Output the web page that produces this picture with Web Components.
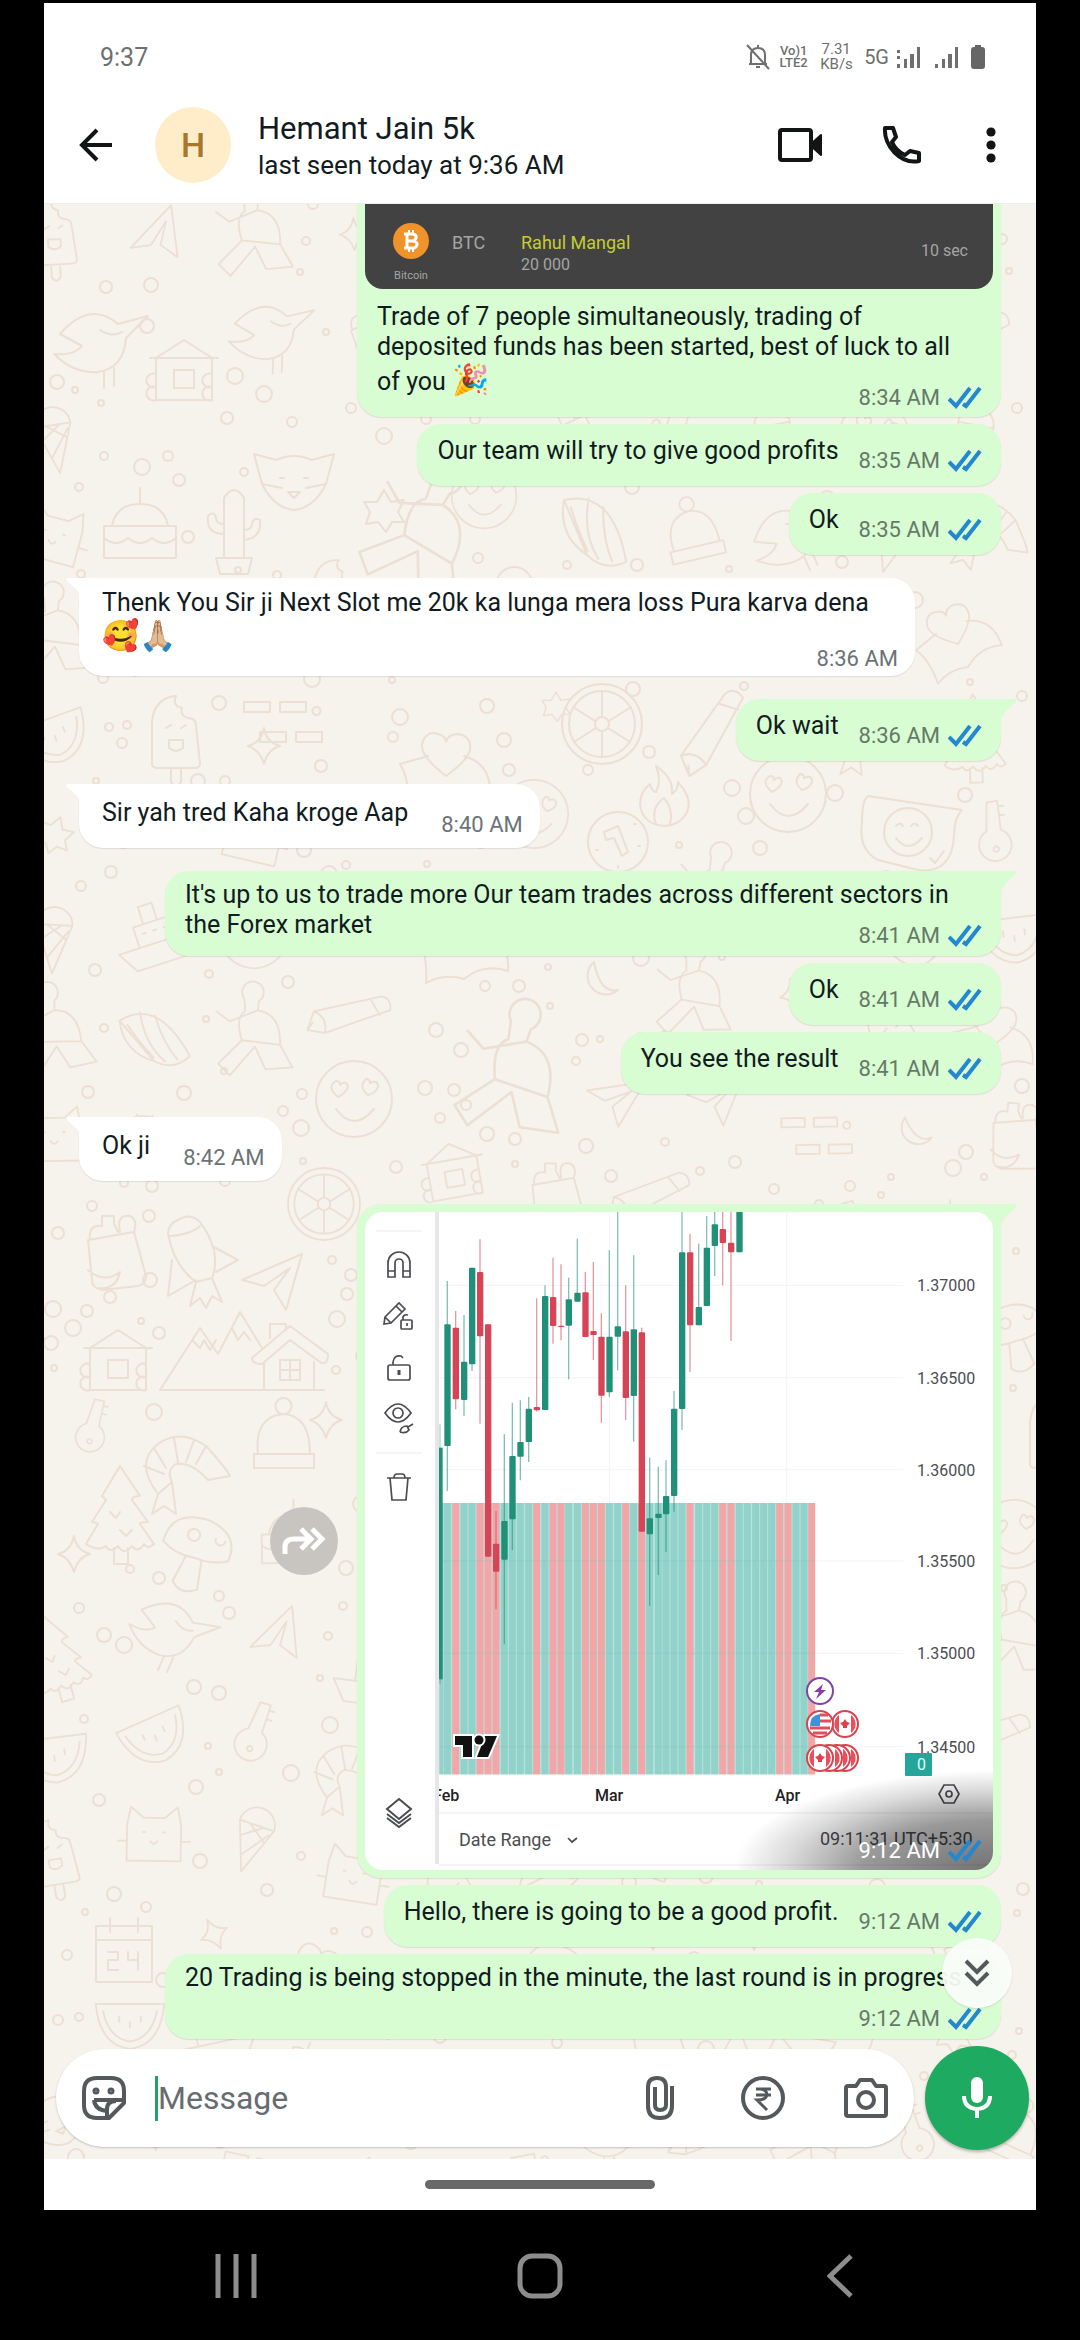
<!DOCTYPE html>
<html lang="en">
<head>
<meta charset="utf-8">
<meta name="viewport" content="width=device-width, initial-scale=1">
<title>Hemant Jain 5k</title>
<style>
  html { background: #000; }
  body { margin: 0; font-family: Roboto, "Noto Sans", sans-serif; color: #111b21; }
</style>
</head>
<body>
<chat-screen>
  <status-bar slot="top"></status-bar>
  <chat-header slot="top" initial="H" name="Hemant Jain 5k" seen="last seen today at 9:36 AM"></chat-header>

  <chat-message out time="8:34 AM" class="first" kind="media">
    <deal-card slot="media"></deal-card>
    Trade of 7 people simultaneously, trading of<br>deposited funds has been started, best of luck to all<br>of you <emoji-mark>🎉</emoji-mark>
  </chat-message>
  <chat-message out time="8:35 AM">Our team will try to give good profits</chat-message>
  <chat-message out time="8:35 AM">Ok</chat-message>
  <chat-message time="8:36 AM" kind="wrap" class="turn">Thenk You Sir ji Next Slot me 20k ka lunga mera loss Pura karva dena<br><emoji-mark>🥰</emoji-mark><emoji-mark>🙏🏼</emoji-mark></chat-message>
  <chat-message out time="8:36 AM" class="turn">Ok wait</chat-message>
  <chat-message time="8:40 AM" class="turn">Sir yah tred Kaha kroge Aap</chat-message>
  <chat-message out time="8:41 AM" kind="wrap" class="turn">It's up to us to trade more Our team trades across different sectors in the Forex market</chat-message>
  <chat-message out time="8:41 AM">Ok</chat-message>
  <chat-message out time="8:41 AM">You see the result</chat-message>
  <chat-message time="8:42 AM" class="turn">Ok ji</chat-message>
  <chat-message out time="9:12 AM" kind="photo" class="turn"><price-chart slot="media"></price-chart></chat-message>
  <chat-message out time="9:12 AM">Hello, there is going to be a good profit.</chat-message>
  <chat-message out time="9:12 AM" kind="wrap">20 Trading is being stopped in the minute, the last round is in progress</chat-message>

  <message-composer slot="composer"></message-composer>
  <system-nav slot="nav"></system-nav>
</chat-screen>

<script>
const define = (name, html, setup) => {
  customElements.define(name, class extends HTMLElement {
    constructor() {
      super();
      const root = this.attachShadow({ mode: 'open' });
      const t = document.createElement('template');
      t.innerHTML = '<style>:host,*{box-sizing:border-box}button{border:0;padding:0;margin:0;background:none;color:inherit;font:inherit;display:block;flex:none}svg{display:block}</style>' + html;
      root.append(t.content.cloneNode(true));
    }
    connectedCallback() { if (setup) setup(this, this.shadowRoot); }
  });
};

/* ---------- wallpaper ---------- */
const DOODLES = {
  icecream: 'M-24 30L-24-12Q-22-36 0-38Q-4-28 6-26Q4-18 12-16Q20-16 20-8L24 30Q24 34 18 34L-18 34Q-24 34-24 30ZM-5 34V48Q0 56 5 48V34M-10-6l5-3m10 3l5-3M-7 6H7V14Q0 20-7 14Z',
  heart: 'M-46 0L-18-8M18-8Q46 0 44 32Q20 24 0 40Q-20 34-38 44Q-36 16-46 0M0 12Q-26-8-24-20Q-20-34-8-30Q0-28 0-22Q2-30 12-30Q26-28 24-14Q22-4 0 12Z',
  wheel: 'M40 0A40 40 0 1 0-40 0A40 40 0 1 0 40 0M33 0A33 33 0 1 0-33 0A33 33 0 1 0 33 0M7 0A7 7 0 1 0-7 0A7 7 0 1 0 7 0M0-7V-33M0 7V33M7-3L29-17M-7-3L-29-17M6 4L28 18M-6 4L-28 18',
  pencil: 'M-44 8L24-26Q36-28 38-14L-26 28L-46 30ZM-44 8Q-28 10-26 28M14-20L28-6M-46 30l4-10',
  flame: 'M-8-30Q10-18 8-2Q14-6 14-14Q30 4 22 18Q14 30 0 30Q-22 28-24 8Q-24-4-14-12Q-12-4-8-4Q-2-16-8-30ZM-8 28Q-14 12 0 2Q10 14 6 28',
  smile: 'M38 0A38 38 0 1 0-38 0A38 38 0 1 0 38 0M-18 10Q0 34 20 10M-16-2Q-28-12-18-18Q-14-18-14-14Q-8-20-6-12Q-8-6-16-2ZM14-4Q4-12 12-20Q16-20 16-16Q24-20 24-12Q22-6 14-4Z',
  note: 'M-44-34L50-20Q42-12 42 6Q40 44 6 40L-34 30Q-54 20-50-8Q-50-30-44-34ZM20 2A24 24 0 1 0-28 2A24 24 0 1 0 20 2M-16-4q4-5 7 0m8 0q4-5 7 0M-16 8Q-4 24 10 8M18 28l5 5l9-12',
  clock: 'M30 0A30 30 0 1 0-30 0A30 30 0 1 0 30 0M-14-10L0-16L10 10L4 14L-4-4L-12-2ZM-22 8h2m40-4h2M0 24v2M16-18h2',
  moon: 'M-6-20A18 18 0 1 0 18 8Q0 12-6-20Z',
  rocket: 'M-14-40Q-2-48 8-38Q30-8 20 18L4 22Q-18 6-24-26Q-24-36-14-40M8-34Q0-26-22-24M20-14L46 0L24 12M-20 0L-24 36L4 20M4 22L-2 46L8 38L14 48L20 36L30 42L20 18',
  plane: 'M-30 4L30-22L14 34L2 14L18-8L-8 10Z',
  cabin: 'M-80 34L-40-28L-22-2L0-44L22-8M-80 34H84M-48-16l8 8l4-8l6 10l6-10M-8-28l6 12l6-8l6 8M12 2L50-30L88-2Q88 10 80 6L50-16L22 8Q12 8 12 2M24 8V34M74 6V34M40 4H60V24H40ZM50 4V24M40 14H60M30-18V-32H46V-26',
  shrimp: 'M-30 26Q-54-6-30-24Q-8-40 18-22Q38 0 42 8L20 12Q4-6-12-4Q-22 2-16 14ZM-44-2l20 8M-34-20l12 20M-14-30l4 24M6-28l-8 22M18-22L8-4M-30 26L-36 46L-24 38L-12 46L-16 14',
  tree: 'M0-44L20-14Q12-14 12-10L28 12Q20 12 20 14L34 34Q28 40 24 34Q18 44 12 36Q4 46-2 36Q-10 44-14 36Q-22 42-34 34L-22 14Q-26 12-28 12L-14-10L-18-14ZM-6 38V54H8V38M-10 2l6 6l4-6M0 20l6 6l6-6',
  mushroom: 'M-34 0Q-34-34 6-32Q38-26 34 2Q20 10 0 8Q-20 10-34 0ZM-8 8L-14 36Q-4 48 12 38L8 8M-12-14a6 6 0 1 0 12 0a6 6 0 1 0-12 0M16-16a5 5 0 1 0 10 0',
  hat: 'M-26 14Q-30-24 0-26Q26-24 26 14M-30 14H30V28H-30ZM0-26a8 8 0 1 0-1 0',
  house: 'M-28-16L0-34L28-16V26H-28ZM-34-16H34M-10-4H10V14H-10ZM-28 0a7 7 0 1 0 0 13a7 7 0 1 0 0 13M28 0a7 7 0 1 0 0 13a7 7 0 1 0 0 13',
  bag: 'M-24-10L22-18L34 26Q34 34 26 36L-10 40Q-20 38-20 30ZM-22-10Q-24-26-10-24V-34H2V-26L6-18M8-18Q4-36 18-34Q26-30 22-18M-24 20Q-8 34 8 22Q4 40-14 38',
  star: 'M0-18Q2-4 16 0Q4 3 0 18Q-4 4-16 0Q-3-3 0-18Z',
  badge: 'M0-20L7-8L20-10L14 2L20 12L8 12L2 22L-6 12L-18 14L-14 2L-20-8L-7-8Z',
  key: 'M-4-36H8V-4A18 18 0 1 1-8-4ZM8-30h6M8-20h6M0 14a3 3 0 1 0 1 0',
  bird: 'M-44-10Q-14-44 14-20L44-28L22-6Q20 24-6 28Q-30 30-50 10Q-30 12-22 2ZM0 28V44M10 24V42M-4-14q12 8 22 2',
  apple: 'M0-14Q22-28 28-4Q28 26 10 34Q0 28-10 34Q-30 24-28-4Q-22-28 0-14ZM0-14Q-2-26 8-34M0-22q-14-2-12-14q12 2 12 14',
  dashes: 'M-36-18h26v10h-26zM0-18h26v10h-26zM-20 12h26v10h-26zM16 12h26v10h-26zM36-13a4 4 0 1 0 1 0',
  fox: 'M-40-20L-18-14Q0-22 18-14L40-20L32 10Q20 34 0 36Q-20 34-32 10ZM-14 4h4m20 0h4M-6 18H6L0 24ZM-32 10L-12 14M32 10L12 14',
  cactus: 'M-10 34V-26Q0-42 10-26V34ZM-10 10Q-28 10-26-8Q-20-14-18-6Q-18 0-10 0M10 16Q28 14 26-4Q20-8 18 0Q18 6 10 6M-18 34H18L14 50H-14Z',
  shell: 'M-36-20Q10-40 36 30Q16 44-4 30ZM-36-20Q-36 16-4 30M-12-26Q-12 10 8 32M4-20Q8 10 22 32M-28-14q10 20 24 40',
  cake: 'M-36 0H36V32H-36ZM-28 0Q-24-22 0-22Q24-22 28 0M0-22V-38M-36 12Q-24 22-12 12Q0 22 12 12Q24 22 36 12',
  cal: 'M-28-22H28V34H-28ZM-28-8H28M-14-30V-16M14-30V-16M-16 4h10v8h-10v10h10M4 4v8h10V4v18',
  melon: 'M-38-18H38Q34 28 0 32Q-34 28-38-18ZM-30-10Q-24 20 0 24Q24 20 30-10M-12-4v6m12 0v6m12-12v6',
  person: 'M-8-40a12 12 0 1 1 16 4L6-26Q32-20 28 14L40 40H10L0 14L-30 44L-42 30L-14 6Q-20-20-8-26ZM6-26L-26-16L-40-28M28 14L-14 6',
  ship: 'M-44 10H44L30 34H-30ZM-20 10V-14H20V10M-8-14V-34H8V-14M-12-4h4m8 0h4m8 0h4',
  leaf: 'M-34 26Q-38-24 30-32Q36 28-34 26ZM-34 26L20-20M-12 8V-14M-2 0H22',
  cone: 'M-20-10A20 20 0 0 1 20-10L0 44ZM-20-10H20M-14 6L8-10M-6 26L16-4M14 6L-8-10',
  cat: 'M-30 30V-10L-26-30L-12-18H12L26-30L30-10V30ZM-12-2h2m20 0h2M-4 8q4 6 8 0M-30 8h-10m70 0h10'
};
const PLACED = [
  ['icecream',132,530],['dashes',236,516],['star',220,542],['heart',402,560],['wheel',558,520],['pencil',672,524,1,-28],['flame',620,592],['smile',744,590],
  ['note',868,626],['clock',574,638],['moon',556,778],['icecream',1010,1230],['shell',552,322,1,10],['badge',340,306],['badge',512,502,.7],['smile',440,292,.85],
  ['person',380,330,1.3,20],['bag',68,1046],['rocket',148,1056],['plane',228,1072],['house',74,1160],['cabin',196,1152],['key',48,1224,.8,12],['shrimp',144,1264],
  ['hat',240,1236],['tree',76,1306],['mushroom',152,1346,1,16],['star',30,1350],['star',282,1216],['cal',80,1744],['melon',86,1816,.9],['fox',250,270],['cactus',190,320],
  ['cake',96,322],['bird',60,140,1],['house',140,170],['person',470,870,1.3,8],['smile',310,895],['heart',420,735],['wheel',280,1000,.9],['apple',572,1086,.9],['cabin',720,1130,1]
];
define('doodle-wall', `
<style>:host{display:block;position:absolute;inset:0;overflow:hidden;background:#f6f2ec}
svg{width:100%;height:100%;fill:none;stroke:#ecdfd4;stroke-width:2;stroke-linejoin:round;stroke-linecap:round}</style>
<svg aria-hidden="true"></svg>`, (el, root) => {
  const names = Object.keys(DOODLES).filter(n => n !== 'cabin');
  let seed = 11;
  const rnd = () => (seed = (seed * 16807) % 2147483647) / 2147483647;
  const items = PLACED.map(p => [...p]);
  const clear = (x, y) => items.every(p => {
    const wide = p[0] === 'cabin' ? 130 : 80;
    return Math.abs(p[1] - x) > wide || Math.abs(p[2] - y) > 80;
  });
  for (let y = 30; y < 2000; y += 20)
    for (let x = 10; x < 1010; x += 20)
      if (clear(x, y)) items.push([names[Math.floor(rnd() * names.length)], x, y, .9, Math.floor(rnd() * 50 - 25)]);
  let out = items.map(([n, x, y, s = 1, r = 0]) => `<path transform="translate(${x} ${y}) rotate(${r}) scale(${s})" d="${DOODLES[n]}"/>`).join('');
  for (let i = 0; i < 1400; i++) {
    const x = Math.floor(rnd() * 992), y = Math.floor(rnd() * 1956);
    if (items.every(p => Math.hypot(p[1] - x, p[2] - y) > (p[0] === 'cabin' ? 84 : p[0] ? 46 : 18))) {
      out += `<circle cx="${x}" cy="${y}" r="${3 + Math.floor(rnd() * 6)}"/>`;
      items.push(['', x, y]);
    }
  }
  root.querySelector('svg').innerHTML = out;
});

/* ---------- screen frame ---------- */
define('chat-screen', `
<style>
:host{display:block;background:#000;min-height:100vh;padding-top:3px}
.phone{margin:0 44px;background:#fff}
.chat{position:relative;overflow:hidden}
.log{position:relative;display:flex;flex-direction:column;gap:7px;padding:0 35px 7px}
::slotted(.turn){margin-top:16px}
.down{position:absolute;right:24px;bottom:151px;width:70px;height:70px;border-radius:50%;background:rgba(250,252,249,.94);box-shadow:0 1px 2px rgba(0,0,0,.12);display:grid;place-items:center}
.handle{height:51px;display:flex;justify-content:center;padding-top:21px}
.handle i{width:230px;height:9px;border-radius:5px;background:#696969}
</style>
<div class="phone">
  <slot name="top"></slot>
  <main class="chat">
    <doodle-wall></doodle-wall>
    <div class="log"><slot></slot></div>
    <slot name="composer"></slot>
    <button class="down" aria-label="Scroll to latest"><svg width="28" height="30" viewBox="0 0 28 30" fill="none" stroke="#54595c" stroke-width="4"><path d="M3 3l11 11L25 3M3 15l11 11l11-11"/></svg></button>
  </main>
  <div class="handle"><i></i></div>
</div>
<slot name="nav"></slot>`);

/* ---------- status bar ---------- */
define('status-bar', `
<style>
:host{display:flex;align-items:center;justify-content:space-between;height:86px;padding:22px 51px 0 56px;color:#6f6f6f;font-size:25px}
.right{display:flex;align-items:center}
.two{display:flex;flex-direction:column;text-align:center;font-weight:500}
.volte{font-size:13px;line-height:12px;margin-left:8px;width:31px}
.speed{font-size:15px;line-height:15px;margin-left:11px;width:32px;font-weight:400}
.net{font-size:20px;margin:0 7px 0 12px}
</style>
<span>9:37</span>
<div class="right">
  <svg width="24" height="26" viewBox="0 0 24 26" fill="none" stroke="#6f6f6f" stroke-width="2"><path d="M5 20V11Q5 4 12 4Q19 4 19 11V20M3 20H21M12 4V1M10 23h4M1 1L23 25"/></svg>
  <span class="two volte"><span>Vo)1</span><span>LTE2</span></span>
  <span class="two speed"><span>7.31</span><span>KB/s</span></span>
  <span class="net">5G</span>
  <svg width="25" height="24" viewBox="0 0 25 24" fill="#6f6f6f"><path d="M1 5h3v3H1zM1 11h3v3H1zM1 19h3v4H1zM8 14h3v9H8zM14 9h4v14h-4zM21 2h3v21h-3z"/></svg>
  <svg width="25" height="24" viewBox="0 0 25 24" fill="#6f6f6f" style="margin:0 12px 0 13px"><path d="M1 19h3v4H1zM8 14h3v9H8zM14 9h4v14h-4zM21 2h3v21h-3z"/></svg>
  <svg width="14" height="26" viewBox="0 0 14 26" fill="#666"><rect y="3" width="14" height="22" rx="3"/><rect x="4" y="1" width="6" height="4"/></svg>
</div>`);

/* ---------- chat header ---------- */
define('chat-header', `
<style>
:host{display:flex;align-items:center;height:115px;padding:0 40px 2px 35px;border-bottom:1px solid #ececec}
.avatar{width:76px;height:76px;border-radius:50%;background:#ffecc9;color:#a8762c;display:grid;place-items:center;font-size:34px;font-weight:500;margin:0 27px 0 42px;flex:none}
.who{flex:1;min-width:0;display:flex;flex-direction:column;padding-top:2px}
.name{font-size:31px;line-height:38px}
.seen{font-size:26px;line-height:34px}
.acts{display:flex;align-items:center}
</style>
<button aria-label="Back"><svg width="34" height="34" viewBox="0 0 34 34" fill="none" stroke="#121416" stroke-width="4"><path d="M33 17H4M18 2L3 17L18 32"/></svg></button>
<div class="avatar"></div>
<div class="who"><span class="name"></span><span class="seen"></span></div>
<div class="acts">
  <button aria-label="Video call"><svg width="46" height="36" viewBox="0 0 46 36"><rect x="3" y="3" width="31" height="30" rx="2" fill="none" stroke="#121416" stroke-width="4"/><path d="M34 17L44 8V28L34 19Z" fill="#121416" stroke="#121416" stroke-width="2" stroke-linejoin="round"/></svg></button>
  <button aria-label="Voice call" style="margin:0 64px 0 59px"><svg width="40" height="40" viewBox="0 0 40 40" fill="none" stroke="#121416" stroke-width="4" stroke-linejoin="round"><path d="M3 3H11L14 12L10 17Q14 26 23 30L28 26L37 28V36Q24 39 12 27Q2 16 3 3Z"/></svg></button>
  <button aria-label="More options"><svg width="10" height="36" viewBox="0 0 10 36" fill="#121416"><circle cx="5" cy="5" r="4.6"/><circle cx="5" cy="18" r="4.6"/><circle cx="5" cy="31" r="4.6"/></svg></button>
</div>`, (el, root) => {
  root.querySelector('.avatar').textContent = el.getAttribute('initial');
  root.querySelector('.name').textContent = el.getAttribute('name');
  root.querySelector('.seen').textContent = el.getAttribute('seen');
});

define('emoji-mark', `<style>:host{font-size:30px;line-height:36px;font-family:"Noto Color Emoji",sans-serif}</style><slot></slot>`);

/* ---------- message bubble ---------- */
define('chat-message', `
<style>
:host{display:flex;justify-content:flex-start;align-items:center;gap:19px}
:host([out]){justify-content:flex-end}
.bubble{position:relative;display:flex;gap:33px;max-width:836px;min-height:64px;padding:14px 17px 10px 23px;background:#fff;border-radius:24px;box-shadow:0 1px 1px rgba(60,50,40,.12)}
.text{font-size:25px;line-height:30px}
.meta{display:flex;align-items:center;gap:8px;align-self:flex-end;font-size:22px;line-height:26px;color:#6c7377;white-space:nowrap}
.tick,.share,.tail{display:none}
:host([out]) .bubble{background:#d8fdd2;gap:20px;padding:12px 19px 12px 20px;min-height:62px}
:host([out]) .tick{display:block}
:host([out]) .meta{color:#667a68}
:host(.turn) .tail{display:block;position:absolute;top:0;left:-13px;fill:#fff}
:host(.turn) .bubble{border-top-left-radius:0}
:host(.turn[out]) .tail{left:auto;right:-16px;transform:scaleX(-1);fill:#d8fdd2}
:host(.turn[out]) .bubble{border-top-left-radius:24px;border-top-right-radius:0}
:host([kind=wrap]) .bubble{flex-direction:column;gap:0;padding:10px 17px 4px 23px;min-height:98px;width:100%}
:host([kind=wrap]) .meta{margin-top:-8px}
:host([kind=wrap][out]) .bubble{padding:9px 19px 7px 20px;min-height:85px}
:host([kind=wrap][out]) .text{min-height:60px}
:host([kind=wrap][out]) .meta{margin-top:-17px}
:host([kind=media]) .bubble{flex-direction:column;gap:0;width:644px;padding:0 8px 6px;border-radius:0 0 24px 24px}
:host([kind=media]) .text{padding:13px 12px 0}
:host([kind=media]) .meta{padding-right:11px;margin-top:-13px}
:host([kind=photo]) .bubble{display:block;width:644px;padding:8px}
:host([kind=photo]) .text{display:none}
:host([kind=photo]) .meta{position:absolute;right:19px;bottom:14px;color:#fff}
:host([kind=photo]) .share{display:grid;place-items:center;width:68px;height:68px;border-radius:50%;background:#c8c5c0}
</style>
<button class="share" aria-label="Forward"><svg width="44" height="30" viewBox="0 0 44 30" fill="none" stroke="#fff" stroke-width="5"><path d="M3 28V21Q3 13 12 13H26M19 3L29 13L19 23M30 3L40 13L30 23"/></svg></button>
<div class="bubble">
  <svg class="tail" width="18" height="20" viewBox="0 0 18 20" aria-hidden="true"><path d="M3 0H18V20L13 16Q13 14 11 12L1 3Q-1 0 3 0Z"/></svg>
  <slot name="media"></slot>
  <div class="text"><slot></slot></div>
  <div class="meta"><time></time><svg class="tick" width="34" height="22" viewBox="0 0 34 22" fill="none" stroke="#2487cf" stroke-width="4"><path d="M1 12L8 19L22 1M15 17L18 19L32 1"/></svg></div>
</div>`, (el, root) => { root.querySelector('time').textContent = el.getAttribute('time'); });

/* ---------- deal picture in the first bubble ---------- */
define('deal-card', `
<style>
:host{display:flex;height:85px;padding:19px 25px 0 26px;background:#424242;border-radius:0 0 18px 18px;color:#a5a5a5;overflow:hidden}
.coin{width:40px;display:flex;flex-direction:column;align-items:center;font-size:11px;line-height:14px;gap:10px}
.sym{font-size:18px;line-height:22px;margin:9px 0 0 21px;width:69px}
.who{flex:1;font-size:16px;line-height:22px;padding-top:9px}
.who b{display:block;font-weight:400;font-size:18px;color:#c6cc33}
.age{font-size:16px;line-height:22px;padding-top:17px}
</style>
<div class="coin"><svg width="36" height="36" viewBox="0 0 36 36"><circle cx="18" cy="18" r="18" fill="#f0932b"/><g fill="none" stroke="#fff" stroke-width="3"><path d="M11 11H20Q24 12 23 15Q22 18 19 18H14M14 18H20Q25 19 24 22Q23 25 20 25H11M14 11V25"/><path d="M16 7V11M20 7V11M16 25V29M20 25V29" stroke-width="2"/></g></svg><span>Bitcoin</span></div>
<span class="sym">BTC</span>
<div class="who"><b>Rahul Mangal</b>20 000</div>
<span class="age">10 sec</span>`);

/* ---------- trading chart picture ---------- */
/* x, wick top, body top, body bottom, wick bottom, rising */
const CANDLES = [
  [292,270,400,765,900,1],[317,360,410,625,655,0],[342,372,512,627,675,1],[366,230,230,520,540,1],[390,145,243,436,698,0],[414,400,400,1097,1097,0],
  [438,960,1058,1142,1255,0],[463,730,990,1106,1360,1],[487,635,795,985,1078,1],[511,628,753,797,868,1],[536,618,653,753,813,1],[560,322,648,658,662,0],
  [585,283,315,657,657,1],[609,200,318,405,458,0],[633,220,404,408,448,0],[656,260,325,404,565,1],[682,143,305,332,332,1],[706,243,304,438,438,0],
  [730,213,420,432,507,0],[754,367,437,614,695,0],[778,178,437,604,618,1],[803,60,406,437,538,1],[827,283,421,621,687,0],[851,193,415,615,752,1],
  [875,410,424,1022,1022,0],[899,800,982,1030,1245,1],[925,827,968,981,1152,1],[948,808,915,970,1083,1],[972,600,653,915,962,1],[996,60,184,654,717,1],
  [1020,128,184,403,543,0],[1046,158,348,403,403,1],[1070,75,170,345,345,1],[1094,60,100,165,255,1],[1118,60,114,156,283,0],[1143,60,155,184,450,0],[1168,60,60,184,184,1]
];
const LATER_BARS = [[1192,1],[1217,1],[1241,1],[1265,1],[1289,0],[1314,0],[1338,1],[1362,1],[1385,0]];
const maple = (x, y) => `<g transform="translate(${x} ${y})"><circle r="13" fill="#fff" stroke="#d9434e" stroke-width="2"/><path d="M-6-9V9A11 11 0 0 1-6-9ZM6-9V9A11 11 0 0 0 6-9Z" fill="#e8505b"/><path d="M0-5L2-2L5-1L2 2V4H-2V2L-5-1L-2-2Z" fill="#e0404c"/></g>`;
define('price-chart', `
<style>
:host{display:block;position:relative;border-radius:18px;overflow:hidden;background:#fff}
svg{width:100%;height:auto;font-family:Roboto,sans-serif}
:host::after{content:"";position:absolute;right:0;bottom:0;width:260px;height:100px;background:radial-gradient(ellipse 100% 100% at 100% 100%,rgba(0,0,0,.55),rgba(0,0,0,.4) 50%,rgba(0,0,0,.14) 80%,transparent)}
</style>
<svg viewBox="0 0 628 658"></svg>`, (el, root) => {
  const bars = [[274, 1, 12], ...CANDLES.map(c => [c[0], c[5]]), ...LATER_BARS].map(([x, up, w = 21]) =>
    `<rect x="${x - w / 2}" y="936" width="${w}" height="814" fill="${up ? '#92d2ca' : '#f3a6a8'}"/>`).join('');
  const candles = CANDLES.map(([x, a, b, c, d, up]) => {
    const k = up ? '#209079' : '#d64456';
    return `<path d="M${x} ${a}V${d}" stroke="${k}" stroke-width="4" opacity=".55"/><rect x="${x - 9}" y="${b}" width="19" height="${c - b}" rx="3" fill="${k}"/>`;
  }).join('');
  const rows = [283, 560, 836, 1110, 1387, 1667];
  root.querySelector('svg').innerHTML = `
  <clipPath id="axis"><rect x="74" y="570" width="554" height="30"/></clipPath>
  <g transform="translate(-15 -21) scale(.33333)">
    <path d="M265 283H1660M265 560H1660M265 836H1660M265 1110H1660M265 1387H1660M265 1667H1660M778 60V1750M1310 60V1750" stroke="#f2f3f5" stroke-width="3"/>
    <rect x="268" y="936" width="1127" height="814" fill="#b5e4dd"/>${bars}
    <path d="M268 1110H1395M268 1387H1395M268 1667H1395" stroke="#85c0b9" stroke-width="2" opacity=".5"/>
    <path d="M270 700V1480" stroke="#209079" stroke-width="3" opacity=".5"/><rect x="267" y="770" width="11" height="695" fill="#209079"/>${candles}
  </g>
  <path d="M70 0H74V652H70Z" fill="#e6e6e9"/>
  <path d="M11 19H57M11 241H57M74 601H628M74 653H628" stroke="#e9eaec"/>
  <g fill="none" stroke="#4a4c52" stroke-width="1.7">
    <path d="M23 65V51A11 11 0 0 1 45 51V65H38V51A4 4 0 0 0 30 51V65ZM23 59H30M38 59H45"/>
    <path d="M20 105L34 91L40 97L26 111L19 112ZM31 94L37 100M20 105L26 111"/><rect x="36" y="108" width="11" height="9" rx="1"/><path d="M38 108V105Q39 102 43 103M42 111V114"/>
    <rect x="23" y="153" width="22" height="15" rx="2"/><path d="M28 153V150Q29 143 36 144L38 146"/><path d="M34 158V163" stroke-width="3"/>
    <path d="M20 201Q33 183 46 201Q33 219 20 201Z"/><circle cx="33" cy="201" r="5"/><path d="M35 220Q36 214 42 214L44 218Q41 222 35 220M43 215L48 212"/>
    <path d="M22 266H46M25 266L27 288H41L43 266M29 266Q29 262 32 262H37Q40 262 40 266"/>
    <path d="M34 587L46 597L34 607L22 597ZM22 602L34 611L46 602M22 606L34 615L46 606" stroke-width="2"/>
    <path d="M203 626L207 630L212 626"/>
    <path d="M579 573H589L594 582L589 591H579L574 582Z"/><circle cx="584" cy="582" r="3"/>
  </g>
  <g font-size="16" fill="#4b4d52">${rows.map((y, i) => `<text x="552" y="${Math.round(y / 3 - 15)}">${['1.37000', '1.36500', '1.36000', '1.35500', '1.35000', '1.34500'][i]}</text>`).join('')}</g>
  <rect x="540" y="541" width="27" height="23" rx="1" fill="#26a69a"/><text x="552" y="558" font-size="16" fill="#d9fffa">0</text>
  <g clip-path="url(#axis)" font-size="16" font-weight="500" fill="#222"><text x="68" y="589">Feb</text><text x="230" y="589">Mar</text><text x="410" y="589">Apr</text></g>
  <g font-size="18" fill="#4b4d52"><text x="94" y="634">Date Range</text><text x="455" y="633">09:11:31 UTC+5:30</text></g>
  <g fill="#111" stroke="#fff" stroke-width="4" paint-order="stroke"><path d="M90 524H107V545H98V533H90Z"/><path d="M120 524H132L123 545H112Z"/><circle cx="114" cy="528" r="4.5"/></g>
  <circle cx="455" cy="479" r="13" fill="#fff" stroke="#7e45a8" stroke-width="2"/><path d="M458 472L449 480H454L451 487L461 478H456Z" fill="#8a3aa8"/>
  ${maple(480, 512)}
  <circle cx="455" cy="512" r="13" fill="#fff" stroke="#d9434e" stroke-width="2"/><path d="M455 503H463M455 509H466M445 516H465M448 521H462" stroke="#e0505b" stroke-width="3"/><path d="M455 502V514H445Q445 503 455 502Z" fill="#3e93d6"/>
  ${maple(480, 546)}${maple(472, 546)}${maple(464, 546)}${maple(455, 546)}`;
});

/* ---------- composer ---------- */
define('message-composer', `
<style>
:host{position:relative;display:flex;align-items:center;gap:11px;padding:0 7px 9px 12px}
form{flex:1;min-width:0;height:98px;border-radius:49px;background:#fff;box-shadow:0 1px 2px rgba(60,50,40,.25);display:flex;align-items:center;padding:0 26px;margin:0}
.caret{width:3px;height:45px;background:#1fa463;margin-left:29px;flex:none}
input{flex:1;min-width:0;border:0;outline:0;background:none;padding:0;font:32px Roboto,sans-serif;color:#111b21;height:60px}
input::placeholder{color:#666c70;opacity:1}
.tools{display:flex;gap:59px}
.mic{width:104px;height:104px;border-radius:50%;background:#1faa61;display:grid;place-items:center;box-shadow:0 2px 3px rgba(0,0,0,.25)}
</style>
<form onsubmit="return false">
  <button type="button" aria-label="Stickers"><svg width="44" height="44" viewBox="0 0 44 44" fill="none" stroke="#55595c" stroke-width="4" stroke-linejoin="round"><path d="M15 2H29Q42 2 42 15V27L27 42H15Q2 42 2 29V15Q2 2 15 2Z"/><path d="M12 24H42M12 24Q13 34 25 35M25 42V33Q25 25 34 25"/><circle cx="14" cy="15" r="1.5"/><circle cx="29" cy="15" r="1.5"/></svg></button>
  <i class="caret"></i>
  <input type="text" placeholder="Message" aria-label="Message">
  <div class="tools">
    <button type="button" aria-label="Attach"><svg width="44" height="44" viewBox="0 0 44 44" fill="none" stroke="#55595c" stroke-width="4"><path d="M34 10V30Q34 42 22 42Q10 42 10 30V11Q10 2 19 2Q28 2 28 11V29Q28 34 22 34Q17 34 17 29V11"/></svg></button>
    <button type="button" aria-label="Payment"><svg width="44" height="44" viewBox="0 0 44 44" fill="none" stroke="#55595c"><circle cx="22" cy="22" r="20" stroke-width="4"/><path d="M15 13H30M15 19H30M15 13H20Q26 14 26 19Q25 24 16 24L26 34" stroke-width="3"/></svg></button>
    <button type="button" aria-label="Camera"><svg width="44" height="44" viewBox="0 0 44 44" fill="none" stroke="#55595c" stroke-width="4" stroke-linejoin="round"><path d="M4 10H12L16 4H28L32 10H40Q42 10 42 12V38Q42 40 40 40H4Q2 40 2 38V12Q2 10 4 10Z"/><circle cx="22" cy="24" r="8"/></svg></button>
  </div>
</form>
<button class="mic" aria-label="Record voice message"><svg width="32" height="42" viewBox="0 0 32 42"><rect x="10" y="0" width="12" height="26" rx="6" fill="#fff"/><path d="M3 19Q3 31 16 32Q29 31 29 19M16 32V41" fill="none" stroke="#fff" stroke-width="4"/></svg></button>`);

/* ---------- system navigation ---------- */
define('system-nav', `
<style>:host{display:grid;grid-template-columns:1fr auto 1fr;align-items:center;height:129px;padding:3px 215px 0}
button:last-of-type{justify-self:end}button:first-of-type{justify-self:start}
svg{fill:none;stroke:#8d8d8d;stroke-width:5}</style>
<button aria-label="Recent apps"><svg width="42" height="44" viewBox="0 0 42 44"><path d="M3 0V44M21 0V44M39 0V44"/></svg></button>
<button aria-label="Home"><svg width="46" height="46" viewBox="0 0 46 46"><rect x="3" y="3" width="40" height="40" rx="12"/></svg></button>
<button aria-label="Back"><svg width="38" height="44" viewBox="0 0 38 44"><path d="M24 2L3 22L24 42"/></svg></button>`);
</script>
</body>
</html>
